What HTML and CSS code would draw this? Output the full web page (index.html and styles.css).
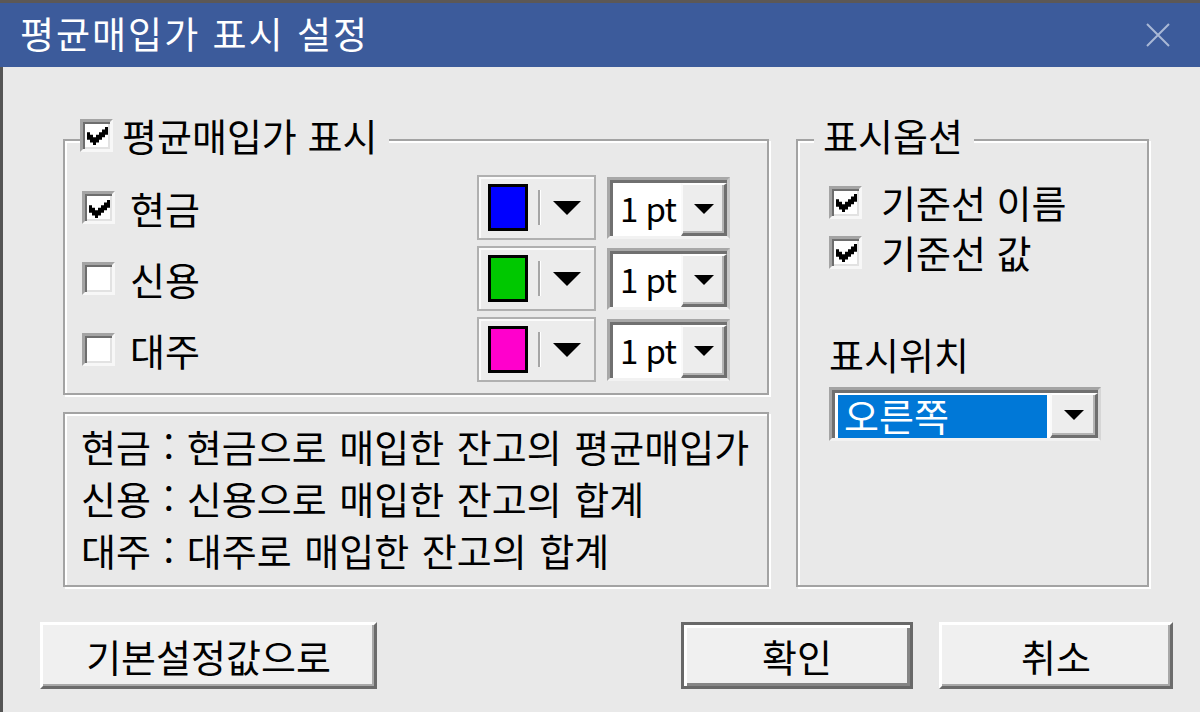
FILE: index.html
```html
<!DOCTYPE html>
<html lang="ko">
<head>
<meta charset="UTF-8">
<title>평균매입가 표시 설정</title>
<link rel="stylesheet" href="styles.css">
</head>
<body>
<div class="window">
  <div class="titlebar">
    <span class="title">평균매입가 표시 설정</span>
    <svg class="close" width="26" height="26" viewBox="0 0 26 26">
      <path d="M2 2 L24 24 M24 2 L2 24" stroke="#a9b8d6" stroke-width="2" fill="none"/>
    </svg>
  </div>

  <div class="client">
    <div class="panels">
      <div class="left-col">
        <fieldset class="group group-main">
          <legend class="legend-main">
            <span class="legend-check">
              <span class="check on"><svg viewBox="0 0 7 7" preserveAspectRatio="none"><polygon points="6,0 7,0 7,3 6,3 6,4 5,4 5,5 4,5 4,6 3,6 3,7 2,7 2,6 1,6 1,5 0,5 0,2 1,2 1,3 2,3 2,4 3,4 3,3 4,3 4,2 5,2 5,1 6,1"/></svg></span>
              평균매입가 표시
            </span>
          </legend>
          <div class="group-body main-body">
            <div class="row">
              <span class="check on"><svg viewBox="0 0 7 7" preserveAspectRatio="none"><polygon points="6,0 7,0 7,3 6,3 6,4 5,4 5,5 4,5 4,6 3,6 3,7 2,7 2,6 1,6 1,5 0,5 0,2 1,2 1,3 2,3 2,4 3,4 3,3 4,3 4,2 5,2 5,1 6,1"/></svg></span>
              <span class="row-label">현금</span>
              <span class="color-combo"><span class="swatch swatch-blue"></span><span class="sep"></span><span class="arrow"></span></span>
              <span class="size-combo"><span class="size-value">1 pt</span><span class="drop"><span class="arrow arrow-sm"></span></span></span>
            </div>
            <div class="row">
              <span class="check"></span>
              <span class="row-label">신용</span>
              <span class="color-combo"><span class="swatch swatch-green"></span><span class="sep"></span><span class="arrow"></span></span>
              <span class="size-combo"><span class="size-value">1 pt</span><span class="drop"><span class="arrow arrow-sm"></span></span></span>
            </div>
            <div class="row">
              <span class="check"></span>
              <span class="row-label">대주</span>
              <span class="color-combo"><span class="swatch swatch-pink"></span><span class="sep"></span><span class="arrow"></span></span>
              <span class="size-combo"><span class="size-value">1 pt</span><span class="drop"><span class="arrow arrow-sm"></span></span></span>
            </div>
          </div>
        </fieldset>

        <div class="info">
          <p>현금 : 현금으로 매입한 잔고의 평균매입가</p>
          <p>신용 : 신용으로 매입한 잔고의 합계</p>
          <p>대주 : 대주로 매입한 잔고의 합계</p>
        </div>
      </div>

      <fieldset class="group group-options">
        <legend class="legend-options">표시옵션</legend>
        <div class="group-body options-body">
          <div class="opt-row">
            <span class="check on"><svg viewBox="0 0 7 7" preserveAspectRatio="none"><polygon points="6,0 7,0 7,3 6,3 6,4 5,4 5,5 4,5 4,6 3,6 3,7 2,7 2,6 1,6 1,5 0,5 0,2 1,2 1,3 2,3 2,4 3,4 3,3 4,3 4,2 5,2 5,1 6,1"/></svg></span>
            <span class="opt-label">기준선 이름</span>
          </div>
          <div class="opt-row">
            <span class="check on"><svg viewBox="0 0 7 7" preserveAspectRatio="none"><polygon points="6,0 7,0 7,3 6,3 6,4 5,4 5,5 4,5 4,6 3,6 3,7 2,7 2,6 1,6 1,5 0,5 0,2 1,2 1,3 2,3 2,4 3,4 3,3 4,3 4,2 5,2 5,1 6,1"/></svg></span>
            <span class="opt-label">기준선 값</span>
          </div>
          <div class="pos-label">표시위치</div>
          <div class="select">
            <span class="select-value">오른쪽</span>
            <span class="drop"><span class="arrow arrow-sm"></span></span>
          </div>
        </div>
      </fieldset>
    </div>

    <div class="buttons">
      <button type="button" class="btn btn-reset">기본설정값으로</button>
      <button type="button" class="btn btn-default">확인</button>
      <button type="button" class="btn btn-cancel">취소</button>
    </div>
  </div>
</div>
</body>
</html>
```

FILE: styles.css
```css
* {
  margin: 0;
  padding: 0;
  box-sizing: border-box;
}

body {
  width: 1200px;
  height: 712px;
  overflow: hidden;
  font-family: "Noto Sans CJK KR", "Noto Sans", sans-serif;
  font-size: 38px;
  color: #000;
  background: #e9e9e9;
}

.window {
  width: 1200px;
  height: 712px;
  display: flex;
  flex-direction: column;
}

/* title bar */
.titlebar {
  height: 67px;
  flex: none;
  display: flex;
  align-items: center;
  justify-content: space-between;
  padding: 0 29px 0 20px;
  background: #3c5b9b;
  border-top: 3px solid #5c5856;
  color: #fff;
}

.title {
  font-size: 37px;
  line-height: 40px;
  letter-spacing: 2px;
  margin-top: -4px;
}

.close {
  display: block;
}

/* client area */
.client {
  flex: 1;
  background: #e9e9e9;
  border-left: 3px solid #555;
}

.panels {
  display: grid;
  grid-template-columns: 706px 353px;
  column-gap: 27px;
  padding: 50px 0 0 60px;
}

.left-col {
  display: flex;
  flex-direction: column;
  gap: 17px;
}

/* etched group frame */
.group,
.info {
  border: 2px solid #a3a3a3;
  box-shadow: inset 2px 2px 0 #fff, 2px 2px 0 #fff;
}

.group {
  margin: 0;
  padding: 0;
  min-width: 0;
}

.group legend {
  line-height: 36px;
  padding-bottom: 10px;
  background: #e9e9e9;
}

.legend-main {
  margin-left: 15px;
  padding-right: 12px;
}

.legend-check {
  display: flex;
  align-items: center;
  gap: 9px;
}

.legend-options {
  margin-left: 16px;
  padding-left: 9px;
  padding-right: 11px;
}

.main-body {
  padding: 12px 37px 11px 17px;
  display: flex;
  flex-direction: column;
  gap: 6px;
}

/* checkbox */
.check {
  width: 33px;
  height: 33px;
  flex: none;
  display: flex;
  align-items: center;
  justify-content: center;
  background: #fff;
  border: 3px solid;
  border-color: #a4a4a4 #f7f7f7 #f7f7f7 #a4a4a4;
  box-shadow: inset 2px 2px 0 #6e6e6e, inset -2px -2px 0 #e2e2e2;
}

.check svg {
  width: 21px;
  height: 18px;
  fill: #000;
  margin: 2px 0 0 1px;
}

.row {
  display: flex;
  align-items: center;
  height: 65px;
}

.row-label {
  flex: 1;
  margin-left: 15px;
  line-height: 40px;
}

/* colour picker */
.color-combo {
  width: 119px;
  height: 65px;
  display: flex;
  align-items: center;
  padding-left: 9px;
  background: #ececec;
  border: 2px solid #b0b0b0;
  box-shadow: inset 2px 2px 0 #fbfbfb;
}

.swatch {
  width: 40px;
  height: 47px;
  border: 3px solid #000;
}

.swatch-blue { background: #0000ff; }
.swatch-green { background: #00c800; }
.swatch-pink { background: #ff00cc; }

.sep {
  width: 3px;
  height: 35px;
  margin-left: 10px;
  border-left: 2px solid #a5a5a5;
  border-right: 1px solid #fff;
}

.arrow {
  width: 0;
  height: 0;
  margin-left: 12px;
  border-left: 14px solid transparent;
  border-right: 14px solid transparent;
  border-top: 14px solid #000;
}

.arrow-sm {
  margin-left: 0;
  border-left-width: 10px;
  border-right-width: 10px;
  border-top-width: 10px;
}

/* line width combo */
.size-combo {
  width: 123px;
  height: 62px;
  margin-left: 11px;
  display: flex;
  padding: 3px 0 0 3px;
  background: #fff;
  border: 3px solid;
  border-color: #a8a8a8 #c8c8c8 #f2f2f2 #a8a8a8;
  box-shadow: inset 3px 3px 0 #707070;
}

.size-value {
  flex: 1;
  font-size: 33px;
  line-height: 50px;
  padding-left: 7px;
  letter-spacing: -1px;
  white-space: nowrap;
  overflow: hidden;
}

.drop {
  width: 46px;
  flex: none;
  display: flex;
  align-items: center;
  justify-content: center;
  background: #ededed;
  border-top: 2px solid #fff;
  border-left: 2px solid #fafafa;
  border-right: 3px solid #6f6f6f;
  border-bottom: 3px solid #6f6f6f;
  box-shadow: inset -2px -2px 0 #b4b4b4;
}

/* legend text box */
.info {
  flex: 1;
  padding: 6px 10px 9px 16px;
}

.info p {
  line-height: 52px;
  white-space: nowrap;
  word-spacing: 2px;
}

/* options group */
.options-body {
  padding: 19px 20px 0 31px;
}

.opt-row {
  display: flex;
  align-items: center;
  height: 40px;
  margin-bottom: 10px;
}

.opt-label {
  margin-left: 19px;
  line-height: 40px;
}

.pos-label {
  margin-top: 62px;
  line-height: 40px;
}

.select {
  width: 272px;
  height: 54px;
  margin-top: 13px;
  display: flex;
  padding: 3px 0 0 3px;
  background: #fff;
  border: 3px solid;
  border-color: #a4a4a4 #d6d6d6 #f2f2f2 #a4a4a4;
  box-shadow: inset 3px 3px 0 #707070;
}

.select-value {
  flex: 1;
  margin: 2px 3px 0 3px;
  padding-left: 6px;
  background: #0078d7;
  color: #fff;
  line-height: 40px;
}

.select .drop {
  width: 48px;
}

/* dialog buttons */
.buttons {
  display: flex;
  gap: 26px;
  margin-top: 35px;
  padding: 0 27px 0 37px;
}

.btn {
  height: 67px;
  font-family: inherit;
  font-size: 38px;
  color: #000;
  background: #f0f0f0;
  border-top: 3px solid #fff;
  border-left: 3px solid #fff;
  border-right: 3px solid #6b6b6b;
  border-bottom: 3px solid #6b6b6b;
  box-shadow: inset -2px -2px 0 #a8a8a8;
}

.btn-reset {
  width: 337px;
  margin-right: auto;
}

.btn-default {
  width: 232px;
  border: 3px solid #686868;
  box-shadow: inset 3px 3px 0 #fff, inset -3px -3px 0 #858585;
}

.btn-cancel {
  width: 234px;
}
```
